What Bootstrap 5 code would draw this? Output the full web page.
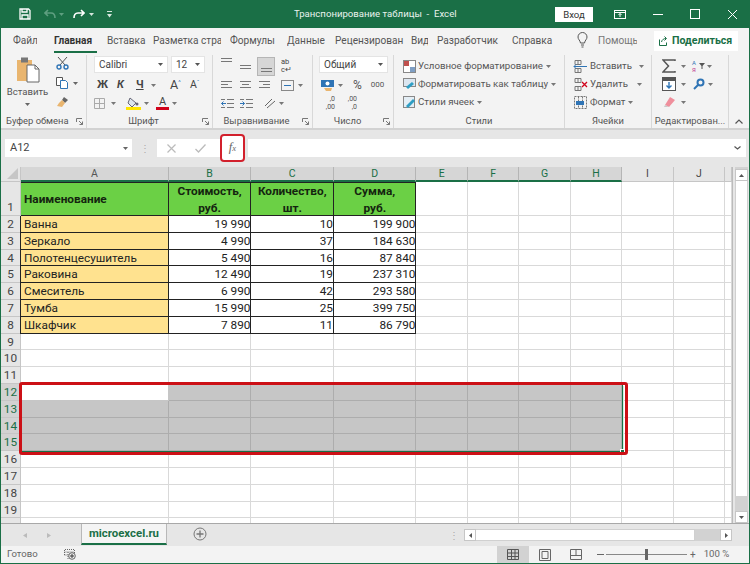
<!DOCTYPE html>
<html lang="ru"><head><meta charset="utf-8"><title>Транспонирование таблицы - Excel</title>
<link href="https://cdn.jsdelivr.net/npm/bootstrap@5.3.0/dist/css/bootstrap.min.css" rel="stylesheet">
<style>
html,body{margin:0;height:564px;overflow:hidden;background:#fff}
body{font-family:Roboto,"Open Sans",sans-serif;font-size:10.5px;color:#444}
svg{display:block;flex:none}
.xapp{width:750px;height:564px;background:#1a6f46;padding:0 1px 1px 1px;overflow:hidden}
.xtitle{height:28px;margin:0 -1px;color:#e9f3ee}
.xtitle-text{width:161px;margin-left:182px;font-size:9.6px;white-space:pre}
.xlogin{width:38px;height:15px;background:#fff;color:#333;font-size:9.6px;line-height:15px;text-align:center;margin-left:100px}
.xtabs{height:27px;background:#f3f3f3;font-size:10.1px;white-space:nowrap;color:#555}
.xtab{flex:none;height:20px;line-height:20px;overflow:hidden;margin-top:3px}
.xtab-on{font-weight:700;border-bottom:2px solid #1a6f46;height:22px;color:#333}
.xshare{width:84px;height:20px;background:#fff;color:#1a6f46;font-weight:700;font-size:10.6px}
.xribbon{height:75px;background:#f3f3f3;border-bottom:2px solid #d2d2d2;white-space:nowrap}
.xgrp{flex:none;height:73px;border-right:1px solid #d8d8d8;position:relative}
.xgrp-body{height:60px}
.xgrp-label{height:13px;line-height:12px;text-align:center;font-size:9.4px;color:#555}
.xlauncher{position:absolute;right:3px;bottom:3px}
.xselect{height:17px;background:#fff;border:1px solid #e4e4e4;font-size:10px;padding:0 4px;color:#444}
.xchev{width:5px;height:3px;flex:none}
.xline{height:18px}
.xstyle-text{font-size:9.7px;color:#555;margin-left:2px}
.xformula{height:37px;background:#e6e6e6;padding-left:4px;padding-right:3px;padding-bottom:1px}
.xbox{height:18px;background:#fff}
.xname{width:127px;padding:0 4px 0 5px;font-size:11px;color:#444}
.xdots{width:25px;color:#aaa;font-size:10px;text-align:center}
.xfx-group{width:87px}
.xfx{width:25px;height:28px;margin-left:auto;border:2px solid #d2202c;border-radius:4px;background:#fff;font-family:"Liberation Serif",serif;font-style:italic;font-size:12.5px;color:#666;line-height:22px;text-align:center;margin-right:-1px}
.xfx span{font-size:8.5px}
.xinput{width:498px;margin-left:4px;padding-right:5px}
.xsheet{height:356px;background:#e6e6e6;position:relative}
.xgridwrap{width:732px;height:356px;overflow:hidden;background:#fff;border-right:1px solid #bbb;flex:none}
.xr{display:grid;grid-template-columns:20px 147.7px 82.8px 82.5px 82.5px 51.3px 51.5px 51.5px 51.5px 51.5px 51px 7px;height:16.8px;font-family:Roboto,sans-serif;font-size:11.8px;color:#222;line-height:16px}
.xr>*{border-right:1px solid #d9d9d9;border-bottom:1px solid #d9d9d9;font-style:normal;font-weight:400;min-width:0;white-space:nowrap;overflow:hidden}
.xr>b{background:#e6e6e6;text-align:center;color:#444;font-size:11.8px;border-color:#c6c6c6}
.xhead{height:15px;font-size:10.5px;line-height:14px}
.xhead>*{text-align:center;color:#444;background:#e6e6e6;border-color:#c6c6c6}
.xhead>.xcorner{background:#e6e6e6}
.xhead>.xcs{background:#d6d6d6;color:#1a6f46;border-bottom:2px solid #1a6f46;border-right-color:#b5b5b5}
.xhead>.xc-a{color:#555}
.xr1{height:34px}
.xr1>b{padding-top:17px}
.xr>.xg{background:#6bd045;border:0 solid #222;border-width:1px 1px 1px 0;font-weight:700;color:#14240f;font-size:11.8px;line-height:16.5px;white-space:normal;text-align:center}
.xr>.xn{background:#ffe28f;border-right:1px solid #222;border-bottom:1px solid #222;padding-left:3px;box-shadow:-1px 0 0 #222}
.xr>.xv{border-right:1px solid #222;border-bottom:1px solid #222;text-align:right;padding-right:0}
.xr>.xs{background:#c6c6c6;border-color:#adadad}
.xr>b.xrs{background:#d2d2d2;color:#1a6f46;border-right:1px solid #1a6f46}
.xr>.xwhite{background:#fff;border-color:#c6c6c6}
.xredbox{position:absolute;left:18px;top:215px;width:609px;height:73px;border:3px solid #cc1016;border-radius:3px;pointer-events:none}
.xsel-edge{position:absolute;left:21px;top:218px;width:601px;height:67px;border-right:1px solid #1a6f46;border-bottom:1px solid #1a6f46;box-shadow:1px 1px 0 #d4f0e0;pointer-events:none}
.xhandle{position:absolute;left:618.500px;top:282px;width:5px;height:5px;background:#1a6f46;border:1px solid #fff}
.xvscroll{width:13px;margin-left:2px;height:356px;background:#d2d2d2}
.xsb-btn{height:12px;width:13px;background:#fff;border:1px solid #c6c6c6;flex:none}
.xsb-thumb{width:13px;height:315px;background:#fff;border-left:1px solid #d0d0d0;border-right:1px solid #d0d0d0}
.xtabstrip{height:23px;background:#e6e6e6;border-top:1px solid #a8a8a8}
.xsheet-tab{width:86px;height:21px;background:#f4f4f4;border:1px solid #b8b8b8;border-top:0;border-bottom:2px solid #1a6f46;color:#1a6f46;font-weight:700;font-size:11.4px;line-height:19px;text-align:center}
.xhs{width:300px;height:20px;margin:1px 17px 0 auto}
.xhs-thumb{width:219px;height:12px;background:#fff;border:1px solid #d0d0d0;border-left:0}
.xhs-track{width:25px;height:12px;background:#d2d2d2}
.xhbtn{width:12px;height:12px;background:#fff;border:1px solid #c6c6c6;flex:none}
.xstatus{height:17px;background:#f3f3f3;font-size:9.6px;color:#666}
.xview-on{width:32px;height:17px;background:#d2d2d2}
.xslider{width:81px;height:1px;background:#888;position:relative}
.xslider-thumb{position:absolute;left:39px;top:-5px;width:3px;height:11px;background:#666}
</style></head><body>
<div class="xapp d-flex flex-column">

<div class="xtitle d-flex align-items-center">
 <svg style="margin-left:19px" width="12" height="12" viewBox="0 0 12 12" fill="none" stroke="#fff" stroke-width="1.3"><path d="M1 1h8.500L11 2.500V11H1zM3 1v3h5V1M3 11V7h6v4"/></svg>
 <svg style="margin-left:13px" width="12" height="10" viewBox="0 0 12 10" fill="none" stroke="#5e9f80" stroke-width="1.6"><path d="M4 1 1 4l3 3M1 4h6c3 0 4 2 4 5"/></svg>
 <svg style="margin-left:3px" class="xchev" viewBox="0 0 5 3"><path d="M0 0h5L2.500 3z" fill="#5e9f80"/></svg>
 <svg style="margin-left:9px" width="12" height="10" viewBox="0 0 12 10" fill="none" stroke="#fff" stroke-width="1.6"><path d="M8 1l3 3-3 3M11 4H5C2 4 1 6 1 9"/></svg>
 <svg style="margin-left:4px" class="xchev" viewBox="0 0 5 3"><path d="M0 0h5L2.500 3z" fill="#d5e6dd"/></svg>
 <svg style="margin-left:13px" width="5" height="7" viewBox="0 0 5 7" fill="#d5e6dd"><path d="M0 0h5v1H0zM0 3h5L2.500 6.500z"/></svg>
 <div class="xtitle-text">Транспонирование таблицы  -  Excel</div>
 <div class="xlogin">Вход</div>
 <svg style="margin-left:21px" width="12" height="9" viewBox="0 0 12 9" fill="none" stroke="#fff"><rect x=".5" y=".5" width="11" height="8"/><path d="M.5 2.500h11M6 7V3.500M4.500 5 6 3.500 7.500 5"/></svg>
 <svg style="margin-left:27px" width="10" height="1" viewBox="0 0 10 1"><path d="M0 .5h10" stroke="#fff"/></svg>
 <svg style="margin-left:27px" width="10" height="10" viewBox="0 0 10 10" fill="none" stroke="#fff"><rect x=".5" y=".5" width="9" height="9"/></svg>
 <svg style="margin-left:28px" width="9" height="9" viewBox="0 0 9 9" stroke="#fff"><path d="M0 0l9 9M9 0 0 9"/></svg>
</div>

<div class="xtabs d-flex position-relative">
 <div class="xtab" style="margin-left:12px;width:24px">Файл</div>
 <div class="xtab xtab-on" style="margin-left:17px;width:43px">Главная</div>
 <div class="xtab" style="margin-left:10px;width:39px">Вставка</div>
 <div class="xtab" style="margin-left:7px;width:68px">Разметка стра</div>
 <div class="xtab" style="margin-left:9px;width:46px">Формулы</div>
 <div class="xtab" style="margin-left:11px;width:38px">Данные</div>
 <div class="xtab" style="margin-left:10px;width:71px">Рецензирован</div>
 <div class="xtab" style="margin-left:5px;width:17px">Вид</div>
 <div class="xtab" style="margin-left:9px;width:63px">Разработчик</div>
 <div class="xtab" style="margin-left:12px;width:42px">Справка</div>
 <svg style="margin:4px 0 0 23px" width="11" height="16" viewBox="0 0 11 16" fill="none" stroke="#555"><path d="M3.500 11C3 8 1 7.500 1 5a4.500 4.500 0 0 1 9 0c0 2.500-2 3-2.500 6zM4 13h3M4.500 15h2"/></svg>
 <div class="xtab" style="margin-left:10px;width:39px;color:#777">Помощь</div>
 <div class="xshare d-flex align-items-center ms-auto" style="margin:3px 11px 0 0">
  <svg style="margin:0 3px 0 4px" width="11" height="10" viewBox="0 0 11 10" fill="none" stroke="#1a6f46"><path d="M1.500 3.500v6h7v-3M3.500 6C4 3.500 6 2.500 8 2.500M6.500.5l2 2-2 2"/></svg>
  <span>Поделиться</span>
 </div>
</div>

<div class="xribbon d-flex">
 <!-- clipboard -->
 <div class="xgrp" style="width:86px">
  <div class="xgrp-body d-flex">
   <div class="d-flex flex-column align-items-center" style="width:47px;margin-left:3px;padding-top:2px">
    <svg width="24" height="26" viewBox="0 0 24 26"><rect x="1" y="3" width="15" height="21" fill="#e9b56f"/><rect x="5" y="0.500" width="7" height="5" fill="#777"/><path d="M11 8h8l4 4v13H11z" fill="#fff" stroke="#666"/><path d="M19 8v4h4" fill="none" stroke="#666"/></svg>
    <div style="margin-top:3px;font-size:9.6px;color:#555;line-height:12px">Вставить</div>
    <svg style="margin-top:5px" class="xchev" viewBox="0 0 5 3"><path d="M0 0h5L2.500 3z" fill="#666"/></svg>
   </div>
   <div class="d-flex flex-column" style="padding:1px 0 0 5px;gap:7px">
    <svg width="13" height="14" viewBox="0 0 13 14" fill="none" stroke="#557"><path d="M2 1l7 8M11 1 4 9" stroke="#555"/><circle cx="3" cy="11" r="2" stroke="#2f74b5" stroke-width="1.400"/><circle cx="10" cy="11" r="2" stroke="#2f74b5" stroke-width="1.400"/></svg>
    <div class="d-flex align-items-center"><svg width="13" height="12" viewBox="0 0 13 12" fill="#fff" stroke="#555"><path d="M.5.500h6v8h-6z"/><path d="M4.500 3.500h5l2 2v6h-7z" stroke="#2f74b5"/></svg><svg style="margin-left:4px" class="xchev" viewBox="0 0 5 3"><path d="M0 0h5L2.500 3z" fill="#666"/></svg></div>
    <svg width="13" height="12" viewBox="0 0 13 12"><path d="M8 1l4 3-3 3-3-3z" fill="#666"/><path d="M6 4l3 3-3 4-5-1 2-3z" fill="#e9b56f"/></svg>
   </div>
  </div>
  <div class="xgrp-label" style="text-align:left;padding-left:5px">Буфер обмена</div>
  <svg class="xlauncher" width="7" height="7" viewBox="0 0 7 7" fill="none" stroke="#777"><path d="M.5 4V.5H6M3 3l3.500 3.500M3.500 6.500h3v-3"/></svg>
 </div>
 <!-- font -->
 <div class="xgrp" style="width:126px">
  <div class="xgrp-body" style="padding:1px 0 0 7px">
   <div class="d-flex" style="gap:3px">
    <div class="xselect d-flex align-items-center justify-content-between" style="width:74px"><span>Calibri</span><svg class="xchev" viewBox="0 0 5 3"><path d="M0 0h5L2.500 3z" fill="#555"/></svg></div>
    <div class="xselect d-flex align-items-center justify-content-between" style="width:34px"><span>12</span><svg class="xchev" viewBox="0 0 5 3"><path d="M0 0h5L2.500 3z" fill="#555"/></svg></div>
   </div>
   <div class="d-flex align-items-center xline" style="margin-top:3px;font-size:11px;color:#444">
    <span class="fw-bold" style="margin-left:3px;width:20px">Ж</span>
    <span class="fw-bold fst-italic" style="width:19px">К</span>
    <span class="fw-bold text-decoration-underline" style="width:15px">Ч</span>
    <svg class="xchev" viewBox="0 0 5 3"><path d="M0 0h5L2.500 3z" fill="#777"/></svg>
    <span style="margin-left:14px;width:20px;font-size:12.5px">A<sup style="font-size:6px;top:-.7em;color:#2f74b5">^</sup></span>
    <span style="font-size:10.5px">A<sup style="font-size:6px;top:-.7em;color:#2f74b5">ˇ</sup></span>
   </div>
   <div class="d-flex align-items-center xline">
    <svg width="11" height="11" viewBox="0 0 11 11" fill="none" stroke="#aaa"><path d="M.5.500h10v10H.5zM5.500.500v10M.5 5.500h10"/></svg>
    <svg style="margin-left:6px" class="xchev" viewBox="0 0 5 3"><path d="M0 0h5L2.500 3z" fill="#777"/></svg>
    <svg style="margin-left:10px" width="15" height="13" viewBox="0 0 15 13"><path d="M4 1l6 5-4 4-4-4z" fill="#dde6ee" stroke="#667"/><circle cx="11" cy="7" r="1.500" fill="#667"/><rect y="10" width="15" height="3" fill="#ffe600"/></svg>
    <svg style="margin-left:3px" class="xchev" viewBox="0 0 5 3"><path d="M0 0h5L2.500 3z" fill="#777"/></svg>
    <div class="d-flex flex-column align-items-center" style="margin-left:7px;width:13px;line-height:10px;font-size:11px;color:#444"><span>A</span><span style="display:block;width:13px;height:3px;background:#d0021b"></span></div>
    <svg style="margin-left:3px" class="xchev" viewBox="0 0 5 3"><path d="M0 0h5L2.500 3z" fill="#777"/></svg>
   </div>
  </div>
  <div class="xgrp-label" style="padding-right:12px">Шрифт</div>
  <svg class="xlauncher" width="7" height="7" viewBox="0 0 7 7" fill="none" stroke="#777"><path d="M.5 4V.5H6M3 3l3.500 3.500M3.500 6.500h3v-3"/></svg>
 </div>
 <!-- align -->
 <div class="xgrp" style="width:100px">
  <div class="xgrp-body" style="padding-left:8px">
   <div class="d-flex align-items-center" style="height:21px;padding-top:1px">
    <svg width="11" height="8" viewBox="0 0 11 8" stroke="#777" style="margin-bottom:8px"><path d="M0 .5h11M0 3.500h11"/></svg>
    <svg style="margin:2px 0 0 8px" width="11" height="4" viewBox="0 0 11 4" stroke="#777"><path d="M0 .5h11M0 3.500h11"/></svg>
    <div class="d-flex align-items-end justify-content-center" style="width:18px;height:19px;margin-left:6px;background:#d6d6d6;border:1px solid #b5b5b5;padding-bottom:3px"><svg width="11" height="4" viewBox="0 0 11 4" stroke="#777"><path d="M0 .5h11M0 3.500h11"/></svg></div>
    <span style="margin-left:6px;font-size:7.5px;line-height:8px;color:#444;width:10px">ab<br>c↵</span>
   </div>
   <div class="d-flex align-items-center xline">
    <svg width="11" height="8" viewBox="0 0 11 8" stroke="#777"><path d="M0 .5h11M0 3.500h7M0 6.500h11"/></svg>
    <svg style="margin-left:8px" width="11" height="8" viewBox="0 0 11 8" stroke="#777"><path d="M0 .5h11M2 3.500h7M0 6.500h11"/></svg>
    <svg style="margin-left:8px" width="11" height="8" viewBox="0 0 11 8" stroke="#777"><path d="M0 .5h11M4 3.500h7M0 6.500h11"/></svg>
    <svg style="margin-left:11px" width="13" height="11" viewBox="0 0 13 11" fill="none" stroke="#888"><rect x=".5" y=".5" width="12" height="10"/><path d="M3 5.500h7" stroke="#2f74b5"/></svg>
    <svg style="margin-left:4px" class="xchev" viewBox="0 0 5 3"><path d="M0 0h5L2.500 3z" fill="#777"/></svg>
   </div>
   <div class="d-flex align-items-center xline">
    <svg width="13" height="9" viewBox="0 0 13 9" fill="none" stroke="#777"><path d="M6 .5h7M6 4.500h7M6 8.500h7M0 .5h4M0 8.500h4"/><path d="M5 4.500H.5M2.500 2.500l-2 2 2 2" stroke="#2f74b5"/></svg>
    <svg style="margin-left:6px" width="13" height="9" viewBox="0 0 13 9" fill="none" stroke="#777"><path d="M6 .5h7M6 4.500h7M6 8.500h7M0 .5h4M0 8.500h4"/><path d="M0 4.500h4.500M2.500 2.500l2 2-2 2" stroke="#2f74b5"/></svg>
    <svg style="margin-left:11px" width="12" height="11" viewBox="0 0 12 11" fill="none" stroke="#666"><path d="M1 8 8 1M3 10l8-7"/></svg>
    <svg style="margin-left:3px" class="xchev" viewBox="0 0 5 3"><path d="M0 0h5L2.500 3z" fill="#777"/></svg>
   </div>
  </div>
  <div class="xgrp-label" style="padding-right:12px">Выравнивание</div>
  <svg class="xlauncher" width="7" height="7" viewBox="0 0 7 7" fill="none" stroke="#777"><path d="M.5 4V.5H6M3 3l3.500 3.500M3.500 6.500h3v-3"/></svg>
 </div>
 <!-- number -->
 <div class="xgrp" style="width:81px">
  <div class="xgrp-body" style="padding:1px 0 0 6px">
   <div class="xselect d-flex align-items-center justify-content-between" style="width:69px"><span>Общий</span><svg class="xchev" viewBox="0 0 5 3"><path d="M0 0h5L2.500 3z" fill="#555"/></svg></div>
   <div class="d-flex align-items-center xline" style="margin-top:3px">
    <svg style="margin-left:2px" width="13" height="11" viewBox="0 0 13 11"><rect width="13" height="7" fill="#2f74b5"/><circle cx="6.500" cy="3.500" r="2" fill="#fff"/><path d="M3 8h8l-1 3H5z" fill="#e9b56f"/></svg>
    <svg style="margin-left:4px" class="xchev" viewBox="0 0 5 3"><path d="M0 0h5L2.500 3z" fill="#777"/></svg>
    <span style="margin-left:10px;font-size:12px;color:#555">%</span>
    <span style="margin-left:9px;font-size:8px;color:#555">000</span>
   </div>
   <div class="d-flex align-items-center xline" style="font-size:7px;line-height:8px;color:#555;text-align:right">
    <span style="margin-left:3px;width:13px">,0<br>,00</span>
    <span style="margin-left:9px;width:13px">,00<br>,0</span>
   </div>
  </div>
  <div class="xgrp-label" style="padding-right:11px">Число</div>
  <svg class="xlauncher" width="7" height="7" viewBox="0 0 7 7" fill="none" stroke="#777"><path d="M.5 4V.5H6M3 3l3.500 3.500M3.500 6.500h3v-3"/></svg>
 </div>
 <!-- styles -->
 <div class="xgrp" style="width:171px">
  <div class="xgrp-body" style="padding:2px 0 0 9px">
   <div class="d-flex align-items-center xline"><svg width="13" height="13" viewBox="0 0 13 13"><rect x=".5" y=".5" width="12" height="12" fill="#fff" stroke="#888"/><rect x="1" y="1" width="5" height="5" fill="#c0504d"/><rect x="7" y="7" width="5" height="5" fill="#7f9fc4"/></svg><span class="xstyle-text">Условное форматирование</span><svg style="margin-left:3px" class="xchev" viewBox="0 0 5 3"><path d="M0 0h5L2.500 3z" fill="#777"/></svg></div>
   <div class="d-flex align-items-center xline"><svg width="13" height="13" viewBox="0 0 13 13"><rect x=".5" y=".5" width="12" height="8" fill="#dce6f0" stroke="#888"/><path d="M3 9l6-5 2 2-6 5z" fill="#2f9ec4"/></svg><span class="xstyle-text">Форматировать как таблицу</span><svg style="margin-left:3px" class="xchev" viewBox="0 0 5 3"><path d="M0 0h5L2.500 3z" fill="#777"/></svg></div>
   <div class="d-flex align-items-center xline"><svg width="13" height="13" viewBox="0 0 13 13"><rect x=".5" y=".5" width="11" height="11" fill="#e4eef5" stroke="#888"/><path d="M3 10l7-7 2 2-7 7z" fill="#2f9ec4"/></svg><span class="xstyle-text">Стили ячеек</span><svg style="margin-left:3px" class="xchev" viewBox="0 0 5 3"><path d="M0 0h5L2.500 3z" fill="#777"/></svg></div>
  </div>
  <div class="xgrp-label">Стили</div>
 </div>
 <!-- cells -->
 <div class="xgrp" style="width:87px">
  <div class="xgrp-body" style="padding:2px 0 0 8px">
   <div class="d-flex align-items-center xline"><svg width="15" height="13" viewBox="0 0 15 13" fill="none" stroke="#777"><path d="M2 .5h6v4H2zM2 8.500h6v4H2zM5 .5v4M5 8.500v4"/><path d="M1 6.500h13M3 4.500l-2 2 2 2" stroke="#2f74b5"/></svg><span class="xstyle-text">Вставить</span><svg style="margin-left:7px" class="xchev" viewBox="0 0 5 3"><path d="M0 0h5L2.500 3z" fill="#777"/></svg></div>
   <div class="d-flex align-items-center xline"><svg width="15" height="13" viewBox="0 0 15 13" fill="none" stroke="#777"><path d="M2 .5h6v4H2zM2 8.500h6v4H2zM5 .5v4M5 8.500v4"/><path d="M9 4l5 5M14 4 9 9" stroke="#d0021b" stroke-width="1.300"/></svg><span class="xstyle-text">Удалить</span><svg style="margin-left:9px" class="xchev" viewBox="0 0 5 3"><path d="M0 0h5L2.500 3z" fill="#777"/></svg></div>
   <div class="d-flex align-items-center xline"><svg width="15" height="13" viewBox="0 0 15 13" fill="none" stroke="#777"><path d="M1.500.5h12v12h-12zM5.500.5v12M9.500.5v12" stroke-dasharray="2 1"/><rect x="3" y="5" width="8" height="4" fill="#2f74b5" stroke="none"/></svg><span class="xstyle-text">Формат</span><svg style="margin-left:3px" class="xchev" viewBox="0 0 5 3"><path d="M0 0h5L2.500 3z" fill="#777"/></svg></div>
  </div>
  <div class="xgrp-label">Ячейки</div>
 </div>
 <!-- editing -->
 <div class="xgrp" style="width:76px;border-right:0">
  <div class="xgrp-body" style="padding:2px 0 0 10px">
   <div class="d-flex align-items-center xline"><svg width="14" height="14" viewBox="0 0 14 14" fill="none" stroke="#555" stroke-width="1.500"><path d="M13 2V1H1l5.500 6L1 13h12v-1"/></svg><svg style="margin-left:5px" class="xchev" viewBox="0 0 5 3"><path d="M0 0h5L2.500 3z" fill="#777"/></svg>
    <span style="margin-left:6px;font-size:6px;line-height:7px;color:#2f74b5;width:7px">А<br><span style="color:#c0398f">Я</span></span><svg width="6" height="6" viewBox="0 0 6 6"><path d="M0 0h6L3.500 3v3h-1V3z" fill="#555"/></svg><svg style="margin-left:2px" class="xchev" viewBox="0 0 5 3"><path d="M0 0h5L2.500 3z" fill="#777"/></svg></div>
   <div class="d-flex align-items-center xline"><svg width="14" height="14" viewBox="0 0 14 14" fill="#fff" stroke="#555"><rect x=".5" y=".5" width="13" height="13"/><rect x="1" y="1" width="12" height="2.500" fill="#555"/><path d="M7 5v6M4.500 8.500 7 11l2.500-2.500" stroke="#2f74b5" stroke-width="1.400" fill="none"/></svg><svg style="margin-left:5px" class="xchev" viewBox="0 0 5 3"><path d="M0 0h5L2.500 3z" fill="#777"/></svg>
    <svg style="margin-left:7px" width="12" height="12" viewBox="0 0 12 12" fill="none" stroke="#2f74b5" stroke-width="2"><circle cx="7.500" cy="4.500" r="3"/><path d="M5 7l-4 4"/></svg><svg style="margin-left:3px" class="xchev" viewBox="0 0 5 3"><path d="M0 0h5L2.500 3z" fill="#777"/></svg></div>
   <div class="d-flex align-items-center xline"><svg width="14" height="12" viewBox="0 0 14 12"><path d="M8 1l5 3-6 7-4-2z" fill="#ef8f9c"/><path d="M3 9l4 2H2z" fill="#c9c9c9"/></svg><svg style="margin-left:5px" class="xchev" viewBox="0 0 5 3"><path d="M0 0h5L2.500 3z" fill="#777"/></svg></div>
  </div>
  <div class="xgrp-label">Редактирован...</div>
 </div>
 <div class="d-flex align-items-end justify-content-center flex-grow-1" style="height:73px;padding-bottom:4px;border-left:1px solid #d8d8d8"><svg width="8" height="5" viewBox="0 0 8 5" fill="none" stroke="#555" stroke-width="1.200"><path d="M.5 4.500 4 1l3.500 3.500"/></svg></div>
</div>

<div class="xformula d-flex align-items-center">
 <div class="xbox xname d-flex align-items-center justify-content-between"><span>A12</span><svg class="xchev" viewBox="0 0 5 3"><path d="M0 0h5L2.500 3z" fill="#666"/></svg></div>
 <div class="xdots">⋮</div>
 <div class="xbox xfx-group d-flex align-items-center">
  <svg style="margin-left:10px" width="9" height="9" viewBox="0 0 9 9" stroke="#bbb" stroke-width="1.200"><path d="M.5.500l8 8M8.500.500l-8 8"/></svg>
  <svg style="margin-left:19px" width="11" height="9" viewBox="0 0 11 9" fill="none" stroke="#bbb" stroke-width="1.300"><path d="M.5 5l3 3L10.500.5"/></svg>
  <div class="xfx">f<span>x</span></div>
 </div>
 <div class="xbox xinput d-flex align-items-center justify-content-end"><svg width="7" height="4" viewBox="0 0 7 4" fill="none" stroke="#555" stroke-width="1.200"><path d="M.5.500 3.500 3l3-2.500"/></svg></div>
</div>

<div class="xsheet d-flex">
 <div class="xgridwrap">
  <div class="xr xhead">
   <i class="xcorner d-flex align-items-end justify-content-end" style="padding:0 2px 2px 0"><svg width="11" height="11" viewBox="0 0 11 11"><path d="M11 0v11H0z" fill="#c6c6c6"/></svg></i>
   <i class="xcs xc-a">A</i><i class="xcs">B</i><i class="xcs">C</i><i class="xcs">D</i><i class="xcs">E</i><i class="xcs">F</i><i class="xcs">G</i><i class="xcs">H</i><i>I</i><i>J</i><i></i>
  </div>
  <div class="xr xr1"><b>1</b><i class="xg" style="text-align:left;padding:8px 0 0 3px">Наименование</i><i class="xg">Стоимость,<br>руб.</i><i class="xg">Количество,<br>шт.</i><i class="xg">Сумма,<br>руб.</i><i></i><i></i><i></i><i></i><i></i><i></i><i></i></div>
  <div class="xr"><b>2</b><i class="xn">Ванна</i><i class="xv">19 990</i><i class="xv">10</i><i class="xv">199 900</i><i></i><i></i><i></i><i></i><i></i><i></i><i></i></div>
  <div class="xr"><b>3</b><i class="xn">Зеркало</i><i class="xv">4 990</i><i class="xv">37</i><i class="xv">184 630</i><i></i><i></i><i></i><i></i><i></i><i></i><i></i></div>
  <div class="xr"><b>4</b><i class="xn">Полотенцесушитель</i><i class="xv">5 490</i><i class="xv">16</i><i class="xv">87 840</i><i></i><i></i><i></i><i></i><i></i><i></i><i></i></div>
  <div class="xr"><b>5</b><i class="xn">Раковина</i><i class="xv">12 490</i><i class="xv">19</i><i class="xv">237 310</i><i></i><i></i><i></i><i></i><i></i><i></i><i></i></div>
  <div class="xr"><b>6</b><i class="xn">Смеситель</i><i class="xv">6 990</i><i class="xv">42</i><i class="xv">293 580</i><i></i><i></i><i></i><i></i><i></i><i></i><i></i></div>
  <div class="xr"><b>7</b><i class="xn">Тумба</i><i class="xv">15 990</i><i class="xv">25</i><i class="xv">399 750</i><i></i><i></i><i></i><i></i><i></i><i></i><i></i></div>
  <div class="xr"><b>8</b><i class="xn">Шкафчик</i><i class="xv">7 890</i><i class="xv">11</i><i class="xv">86 790</i><i></i><i></i><i></i><i></i><i></i><i></i><i></i></div>
  <div class="xr"><b>9</b><i></i><i></i><i></i><i></i><i></i><i></i><i></i><i></i><i></i><i></i><i></i></div>
  <div class="xr"><b>10</b><i></i><i></i><i></i><i></i><i></i><i></i><i></i><i></i><i></i><i></i><i></i></div>
  <div class="xr"><b>11</b><i></i><i></i><i></i><i></i><i></i><i></i><i></i><i></i><i></i><i></i><i></i></div>
  <div class="xr"><b class="xrs">12</b><i class="xwhite"></i><i class="xs"></i><i class="xs"></i><i class="xs"></i><i class="xs"></i><i class="xs"></i><i class="xs"></i><i class="xs"></i><i></i><i></i><i></i></div>
  <div class="xr"><b class="xrs">13</b><i class="xs"></i><i class="xs"></i><i class="xs"></i><i class="xs"></i><i class="xs"></i><i class="xs"></i><i class="xs"></i><i class="xs"></i><i></i><i></i><i></i></div>
  <div class="xr"><b class="xrs">14</b><i class="xs"></i><i class="xs"></i><i class="xs"></i><i class="xs"></i><i class="xs"></i><i class="xs"></i><i class="xs"></i><i class="xs"></i><i></i><i></i><i></i></div>
  <div class="xr"><b class="xrs">15</b><i class="xs"></i><i class="xs"></i><i class="xs"></i><i class="xs"></i><i class="xs"></i><i class="xs"></i><i class="xs"></i><i class="xs"></i><i></i><i></i><i></i></div>
  <div class="xr"><b>16</b><i></i><i></i><i></i><i></i><i></i><i></i><i></i><i></i><i></i><i></i><i></i></div>
  <div class="xr"><b>17</b><i></i><i></i><i></i><i></i><i></i><i></i><i></i><i></i><i></i><i></i><i></i></div>
  <div class="xr"><b>18</b><i></i><i></i><i></i><i></i><i></i><i></i><i></i><i></i><i></i><i></i><i></i></div>
  <div class="xr"><b>19</b><i></i><i></i><i></i><i></i><i></i><i></i><i></i><i></i><i></i><i></i><i></i></div>
  <div class="xr"><b></b><i></i><i></i><i></i><i></i><i></i><i></i><i></i><i></i><i></i><i></i><i></i></div>
 </div>
 <div class="xvscroll d-flex flex-column">
  <div class="xsb-btn d-flex align-items-center justify-content-center" style="margin-top:2px"><svg class="xchev" viewBox="0 0 5 3"><path d="M0 3h5L2.500 0z" fill="#555"/></svg></div>
  <div class="xsb-thumb"></div>
  <div class="xsb-btn d-flex align-items-center justify-content-center mt-auto"><svg class="xchev" viewBox="0 0 5 3"><path d="M0 0h5L2.500 3z" fill="#555"/></svg></div>
 </div>
 <div class="xsel-edge"></div>
 <div class="xhandle"></div>
 <div class="xredbox"></div>
</div>

<div class="xtabstrip d-flex">
 <svg style="margin:9px 0 0 22px" width="4" height="5" viewBox="0 0 4 5"><path d="M4 0v5L0 2.500z" fill="#bbb"/></svg>
 <svg style="margin:9px 0 0 20px" width="4" height="5" viewBox="0 0 4 5"><path d="M0 0v5l4-2.500z" fill="#bbb"/></svg>
 <div class="xsheet-tab" style="margin-left:30px">microexcel.ru</div>
 <svg style="margin:3px 0 0 26px" width="14" height="14" viewBox="0 0 14 14" fill="none" stroke="#777"><circle cx="7" cy="7" r="6"/><path d="M7 3.500v7M3.500 7h7" stroke-width="1.300"/></svg>
 <div class="xhs d-flex align-items-center">
  <span style="color:#aaa;font-size:10px;width:32px;padding-left:17px">⋮</span>
  <div class="xhbtn d-flex align-items-center justify-content-center"><svg width="3" height="5" viewBox="0 0 3 5"><path d="M3 0v5L0 2.500z" fill="#555"/></svg></div>
  <div class="xhs-thumb"></div><div class="xhs-track"></div>
  <div class="xhbtn d-flex align-items-center justify-content-center"><svg width="3" height="5" viewBox="0 0 3 5"><path d="M0 0v5l3-2.500z" fill="#555"/></svg></div>
 </div>
</div>

<div class="xstatus d-flex align-items-center">
 <span style="margin-left:6px;width:57px">Готово</span>
 <svg width="12" height="11" viewBox="0 0 12 11" fill="none" stroke="#666"><path d="M.5 6V.5h10V4" stroke-dasharray="1 1"/><path d="M.5 3h10M.5 6h4M4 3v7" stroke-dasharray="1 1"/><circle cx="8" cy="7" r="3.300"/><circle cx="8" cy="7" r="1.300" fill="#666"/></svg>
 <div class="xview-on d-flex align-items-center justify-content-center" style="margin-left:421px"><svg width="12" height="11" viewBox="0 0 12 11" fill="none" stroke="#555"><path d="M.5.500h11v10H.5zM4.500.500v10M8 .5v10M.5 4h11M.5 7.500h11"/></svg></div>
 <svg style="margin-left:10px" width="12" height="12" viewBox="0 0 12 12" fill="none" stroke="#666"><path d="M.5.500h11v11H.5z"/><path d="M3 2.500h6v7H3z"/></svg>
 <svg style="margin-left:19px" width="12" height="11" viewBox="0 0 12 11" fill="none" stroke="#666"><path d="M.5.500h11v10H.5zM.5 6.500h11M6 .5v6"/></svg>
 <span style="margin-left:15px;width:7px;height:1px;background:#666"></span>
 <div class="xslider" style="margin-left:2px"><span class="xslider-thumb"></span></div>
 <span style="margin-left:3px;font-size:10px;color:#666;line-height:1">+</span>
 <span style="margin-left:8px">100 %</span>
</div>

</div>
</body></html>
